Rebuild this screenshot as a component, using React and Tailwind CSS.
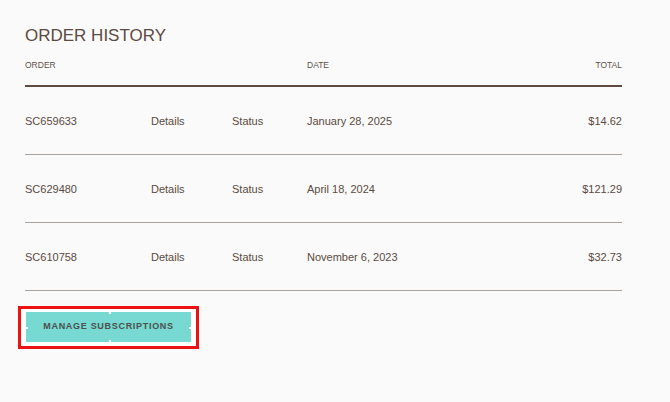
import React from 'react';

const orders = [
    { id: 'SC659633', date: 'January 28, 2025', total: '$14.62' },
    { id: 'SC629480', date: 'April 18, 2024', total: '$121.29' },
    { id: 'SC610758', date: 'November 6, 2023', total: '$32.73' },
];

const cols = 'grid grid-cols-[126px_81px_75px_1fr_auto]';

const App = () => {
    return (
        <div
            className="min-h-[402px] w-full bg-[#fafafa] text-[#5b4a41] px-[25px] pt-[26px]"
            style={{ fontFamily: '"Liberation Sans", Arial, sans-serif' }}
        >
            <div className="w-[597px]">
                <h1 className="text-[17px] leading-[20px]">ORDER HISTORY</h1>

                {/* header */}
                <div className={`${cols} mt-[13px] pb-[14px] border-b-2 border-[#5e4a3f] text-[8.5px] leading-[12px] text-[#5e5049]`}>
                    <span>ORDER</span>
                    <span></span>
                    <span></span>
                    <span>DATE</span>
                    <span className="text-right">TOTAL</span>
                </div>

                {orders.map((o) => (
                    <div
                        key={o.id}
                        className={`${cols} h-[68px] items-center border-b border-[#aaa19b] text-[11px] leading-[16px]`}
                    >
                        <span>{o.id}</span>
                        <span>Details</span>
                        <span>Status</span>
                        <span>{o.date}</span>
                        <span className="text-right">{o.total}</span>
                    </div>
                ))}

                {/* highlighted button */}
                <div className="mt-[15px] -ml-[7px] inline-block border-[3px] border-[#ee1111] bg-white pl-[5px] pr-[5px] pt-[3px] pb-[4px]">
                    <button className="relative block h-[30px] w-[165px] bg-[#77d9d1] text-[9px] font-bold tracking-[0.7px] text-[#4a4f4f]">
                        MANAGE SUBSCRIPTIONS
                        <span className="absolute left-1/2 top-0 h-[2px] w-[2px] bg-white" />
                        <span className="absolute left-1/2 bottom-0 h-[2px] w-[2px] bg-white" />
                        <span className="absolute left-0 top-1/2 h-[2px] w-[2px] bg-white" />
                        <span className="absolute right-0 top-1/2 h-[2px] w-[2px] bg-white" />
                    </button>
                </div>
            </div>
        </div>
    );
};

export default App;
